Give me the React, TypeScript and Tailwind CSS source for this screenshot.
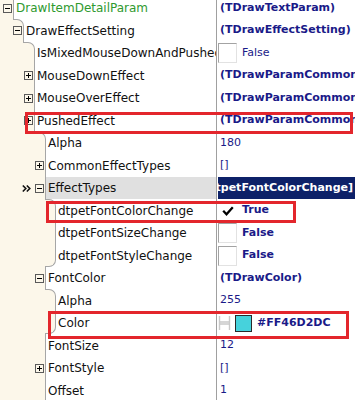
import React from "react";

type Seg = "none" | "top" | "bottom";
type Row = {
  lvl: 0 | 1 | 2 | 3 | 4;
  seg: Seg;
  from?: 0 | 1 | 2 | 3 | 4;
  exp?: "+" | "-";
  marker?: boolean;
  name: string;
  green?: boolean;
  selected?: boolean;
  value: React.ReactNode;
};

const GUTTER_W = ["w-[14px]", "w-[24px]", "w-[35px]", "w-[46px]", "w-[56px]"];
const SPACER_W = ["w-[13px]", "w-[23px]", "w-[34px]", "w-[45px]", "w-[55px]"];

const NAVY = "text-[#1a1a88]";

function Expander({ kind }: { kind: "+" | "-" }) {
  return (
    <svg width="9" height="9" viewBox="0 0 9 9" className="shrink-0">
      <rect x="0.5" y="0.5" width="8" height="8" fill="none" stroke="#5a5a5a" />
      <path d="M2 4.5h5" stroke="#000" strokeWidth="1" />
      {kind === "+" && <path d="M4.5 2v5" stroke="#000" strokeWidth="1" />}
    </svg>
  );
}

function Marker() {
  return (
    <svg width="9" height="9" viewBox="0 0 9 9" className="shrink-0">
      <path d="M0.8 1.5l3 3-3 3M4.8 1.5l3 3-3 3" fill="none" stroke="#111" strokeWidth="1.6" />
    </svg>
  );
}

function CheckBox() {
  return (
    <span className="w-[19px] h-[20px] shrink-0 bg-white border border-t-[#a3a3a3] border-l-[#a3a3a3] border-r-[#e2e2e2] border-b-[#e2e2e2]" />
  );
}

function Bold({ children }: { children: React.ReactNode }) {
  return <span className={`font-bold ${NAVY}`}>{children}</span>;
}
function Plain({ children }: { children: React.ReactNode }) {
  return <span className={NAVY}>{children}</span>;
}

const rows: Row[] = [
  { lvl: 0, seg: "none", exp: "-", name: "DrawItemDetailParam", green: true, value: <Bold>(TDrawTextParam)</Bold> },
  { lvl: 1, seg: "top", from: 0, exp: "-", name: "DrawEffectSetting", value: <Bold>(TDrawEffectSetting)</Bold> },
  {
    lvl: 2,
    seg: "top",
    from: 1,
    name: "IsMixedMouseDownAndPushedEffect",
    value: (
      <span className="flex items-center gap-[5px] -ml-[2px]">
        <CheckBox />
        <Plain>False</Plain>
      </span>
    ),
  },
  { lvl: 2, seg: "none", exp: "+", name: "MouseDownEffect", value: <Bold>(TDrawParamCommon)</Bold> },
  { lvl: 2, seg: "none", exp: "+", name: "MouseOverEffect", value: <Bold>(TDrawParamCommon)</Bold> },
  { lvl: 2, seg: "none", exp: "+", name: "PushedEffect", value: <Bold>(TDrawParamCommon)</Bold> },
  { lvl: 3, seg: "top", from: 2, name: "Alpha", value: <Plain>180</Plain> },
  { lvl: 3, seg: "none", exp: "+", name: "CommonEffectTypes", value: <Plain>[]</Plain> },
  { lvl: 3, seg: "none", exp: "-", marker: true, selected: true, name: "EffectTypes", value: null },
  {
    lvl: 4,
    seg: "top",
    from: 3,
    name: "dtpetFontColorChange",
    value: (
      <span className="flex items-center gap-[5px] -ml-[2px]">
        <span className="w-[19px] h-[20px] shrink-0 flex items-center justify-center">
          <svg width="12" height="10" viewBox="0 0 12 10">
            <path d="M1.2 4.8l3.3 3.4L10.8 1.2" fill="none" stroke="#000" strokeWidth="2.3" />
          </svg>
        </span>
        <Bold>True</Bold>
      </span>
    ),
  },
  {
    lvl: 4,
    seg: "none",
    name: "dtpetFontSizeChange",
    value: (
      <span className="flex items-center gap-[5px] -ml-[2px]">
        <CheckBox />
        <Bold>False</Bold>
      </span>
    ),
  },
  {
    lvl: 4,
    seg: "bottom",
    from: 3,
    name: "dtpetFontStyleChange",
    value: (
      <span className="flex items-center gap-[5px] -ml-[2px]">
        <CheckBox />
        <Bold>False</Bold>
      </span>
    ),
  },
  { lvl: 3, seg: "none", exp: "-", name: "FontColor", value: <Bold>(TDrawColor)</Bold> },
  { lvl: 4, seg: "top", from: 3, name: "Alpha", value: <Plain>255</Plain> },
  {
    lvl: 4,
    seg: "bottom",
    from: 3,
    name: "Color",
    value: (
      <span className="flex items-center -ml-[2px]">
        <svg width="13" height="16" viewBox="0 0 13 16" className="shrink-0">
          <path d="M1.5 1v14M11.5 1v14M1.5 7h10M1.5 9h10" stroke="#c9c9c9" strokeWidth="1.4" fill="none" />
        </svg>
        <span className="ml-[4px] w-[17px] h-[17px] shrink-0 bg-[#46d2dc] border border-[#2a2a2a]" />
        <span className="ml-[5px]">
          <Bold>#FF46D2DC</Bold>
        </span>
      </span>
    ),
  },
  { lvl: 3, seg: "none", name: "FontSize", value: <Plain>12</Plain> },
  { lvl: 3, seg: "none", exp: "+", name: "FontStyle", value: <Plain>[]</Plain> },
  { lvl: 3, seg: "none", name: "Offset", value: <Plain>1</Plain> },
];

function Gutter({ row }: { row: Row }) {
  const spacerIdx = row.seg === "none" ? row.lvl : (row.from as number);
  const boxCls =
    row.seg === "top"
      ? "flex-1 bg-[#fcf7ea] border-r border-t border-[#a6a6a6] rounded-tr-[7px]"
      : row.seg === "bottom"
      ? "flex-1 bg-[#fcf7ea] border-r border-b border-[#a6a6a6] rounded-br-[7px]"
      : "flex-1 bg-[#fcf7ea] border-r border-[#a6a6a6]";
  return (
    <div className={`grid shrink-0 h-full bg-white ${GUTTER_W[row.lvl]}`}>
      <div className="col-start-1 row-start-1 flex h-full">
        <div className={`${SPACER_W[spacerIdx]} shrink-0 bg-[#fcf7ea]`} />
        <div className={boxCls} />
      </div>
      <div className="col-start-1 row-start-1 flex items-center justify-end gap-[4px] pr-[2px] h-full">
        {row.marker && <Marker />}
        {row.exp && <Expander kind={row.exp} />}
      </div>
    </div>
  );
}

function RowView({ row }: { row: Row }) {
  return (
    <div className="flex h-[22.5px]">
      <div className="flex w-[216px] shrink-0 h-full">
        <Gutter row={row} />
        <div
          className={`flex-1 min-w-0 flex items-center pl-[2px] overflow-hidden whitespace-nowrap text-[12px] ${
            row.selected ? "bg-[#e0e0e0]" : "bg-white"
          } ${row.green ? "text-[#2f9a2f]" : "text-[#111]"}`}
        >
          {row.name}
        </div>
      </div>
      <div className="flex-1 min-w-0 h-full border-l border-[#a0a0a0] flex items-center text-[11px] overflow-hidden whitespace-nowrap">
        {row.selected ? (
          <div className="w-full h-full flex items-center justify-end overflow-hidden bg-[#0d2168] pr-[2px] ml-[1px]">
            <span className="font-bold text-white shrink-0">[dtpetFontColorChange]</span>
          </div>
        ) : (
          <div className="pl-[3px] flex items-center">{row.value}</div>
        )}
      </div>
    </div>
  );
}

export default function App() {
  return (
    <div
      className="relative w-[355px] h-[400px] overflow-hidden bg-white"
      style={{ fontFamily: '"DejaVu Sans", Verdana, sans-serif' }}
    >
      <div className="-mt-[3.25px]">
        {rows.map((r, i) => (
          <RowView key={i} row={r} />
        ))}
      </div>
      <div className="absolute left-[25px] top-[112px] w-[328px] h-[22px] border-[3px] border-[#e3262c]" />
      <div className="absolute left-[46px] top-[201px] w-[250px] h-[22px] border-[3px] border-[#e3262c]" />
      <div className="absolute left-[48px] top-[311px] w-[301px] h-[28px] border-[3px] border-[#e3262c]" />
    </div>
  );
}
